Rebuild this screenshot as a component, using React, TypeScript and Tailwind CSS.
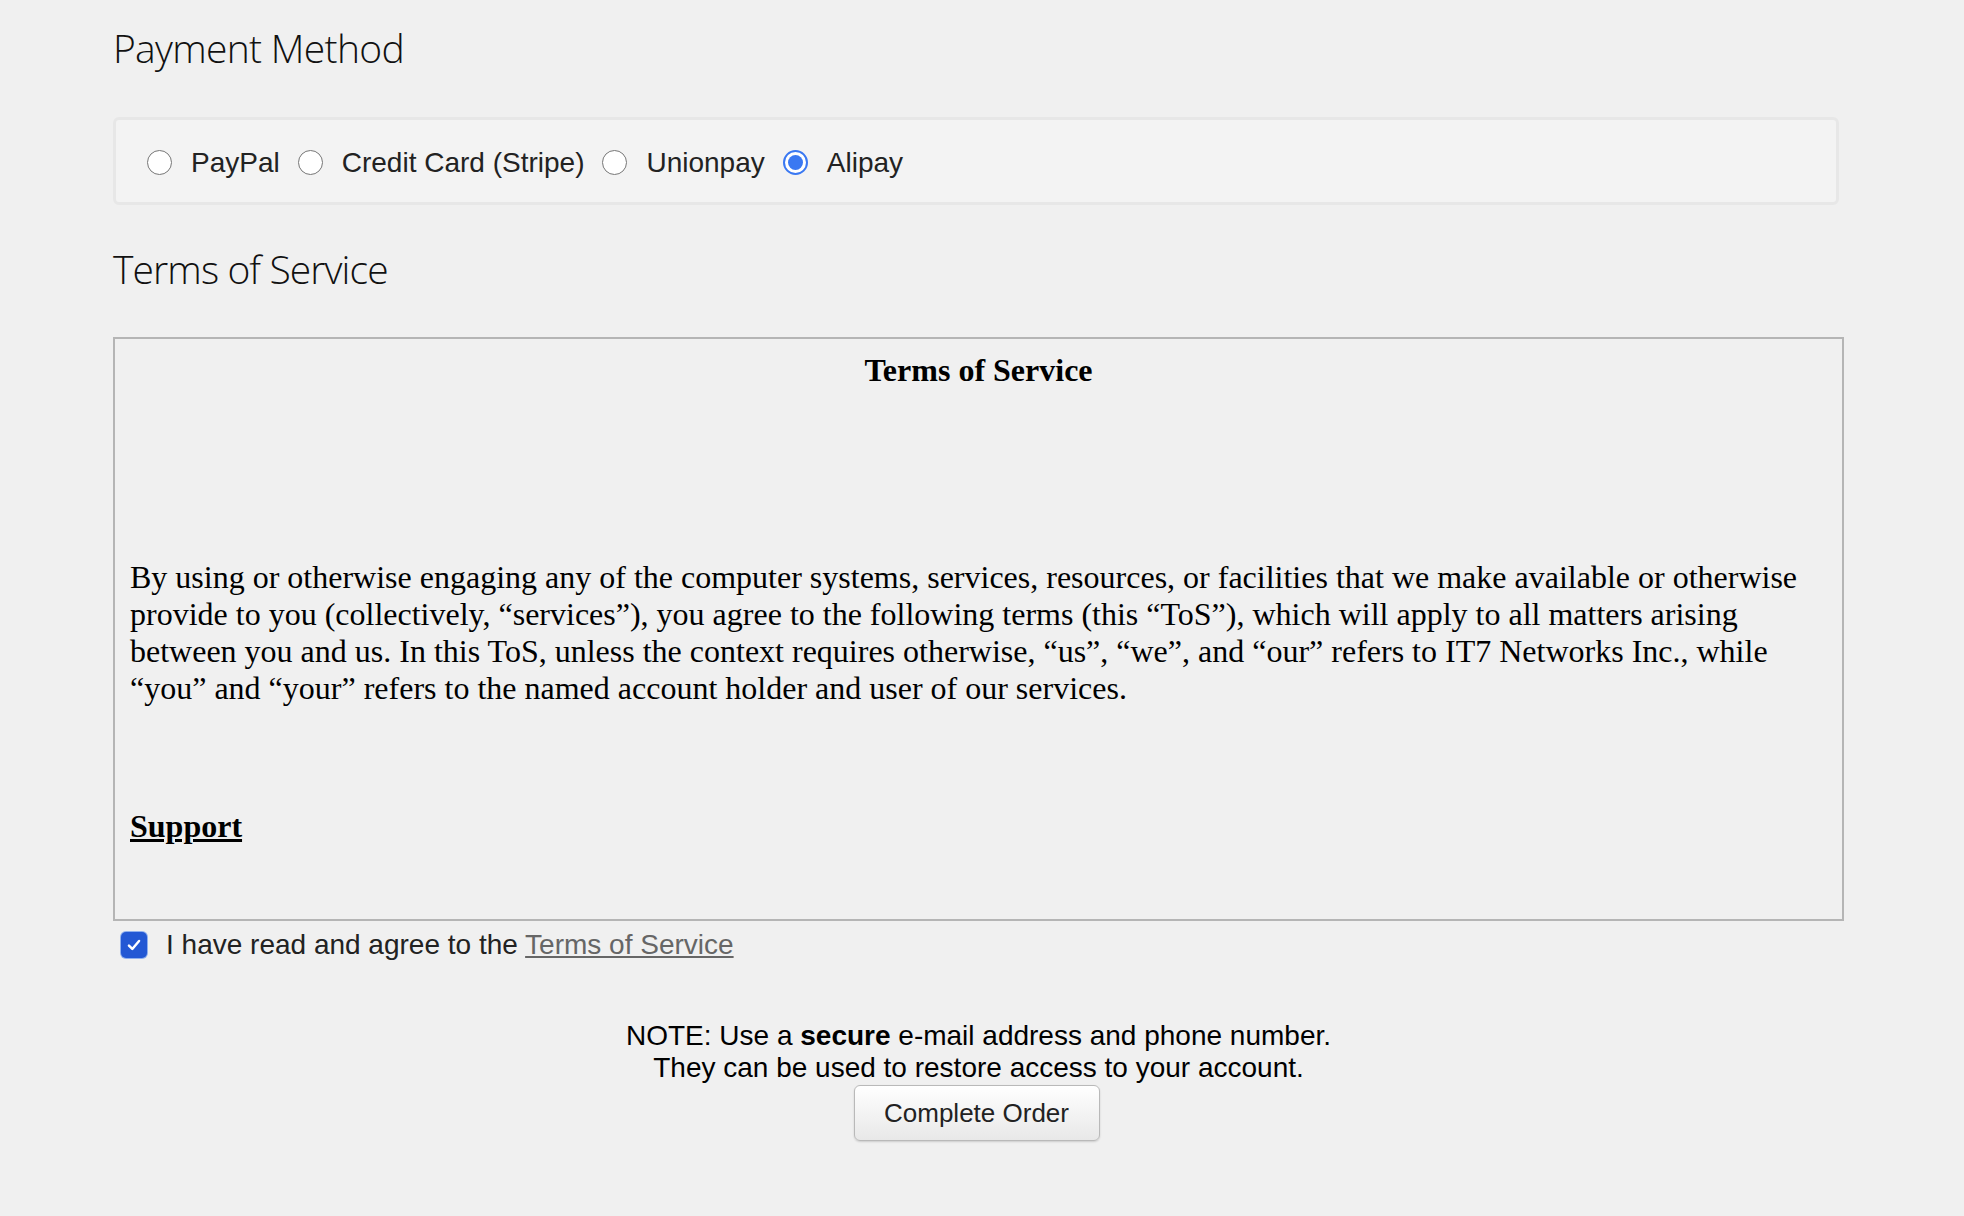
import React from "react";

const sans = { fontFamily: '"Liberation Sans", Arial, sans-serif' };
const heading = { fontFamily: '"Open Sans", sans-serif' };

function Radio({ label, checked }: { label: string; checked?: boolean }) {
  return (
    <label className="flex items-center">
      {checked ? (
        <span className="w-[25px] h-[25px] rounded-full border-2 border-[#3a78f2] bg-white flex items-center justify-center">
          <span className="w-[15px] h-[15px] rounded-full bg-[#3a78f2]" />
        </span>
      ) : (
        <span className="w-[25px] h-[25px] rounded-full border-[1.5px] border-[#767676] bg-white" />
      )}
      <span className="ml-[19px] mr-[18px] text-[28px] leading-[32px] text-[#222]">
        {label}
      </span>
    </label>
  );
}

export default function App() {
  return (
    <div className="min-h-screen w-full bg-[#f0f0f0] text-black" style={sans}>
      <div className="ml-[113px] w-[1731px] pt-[20px]">
        {/* Payment method */}
        <h2
          className="text-[39px] leading-[56px] font-light text-[#111] tracking-[-0.7px]"
          style={heading}
        >
          Payment Method
        </h2>
        <div className="mt-[41px] w-[1726px] h-[88px] rounded-[6px] border-[3px] border-[#e7e7e7] bg-[#f3f3f3] flex items-center pl-[31px] pt-[3px]">
          <Radio label="PayPal" />
          <Radio label="Credit Card (Stripe)" />
          <Radio label="Unionpay" />
          <Radio label="Alipay" checked />
        </div>

        {/* Terms of service */}
        <h2
          className="mt-[36px] text-[39px] leading-[56px] font-light text-[#111] tracking-[-0.9px]"
          style={heading}
        >
          Terms of Service
        </h2>
        <div
          className="mt-[40px] h-[584px] border-2 border-[#b5b5b5] overflow-hidden px-[15px] pt-[13px] text-[32px] leading-[37px]"
          style={{ fontFamily: '"Liberation Serif", "Times New Roman", serif' }}
        >
          <p className="text-center font-bold">Terms of Service</p>
          <p className="mt-[170px]">
            By using or otherwise engaging any of the computer systems, services, resources, or facilities that we make available or otherwise provide to you (collectively, “services”), you agree to the following terms (this “ToS”), which will apply to all matters arising between you and us. In this ToS, unless the context requires otherwise, “us”, “we”, and “our” refers to IT7 Networks Inc., while “you” and “your” refers to the named account holder and user of our services.
          </p>
          <p className="mt-[101px] font-bold underline">Support</p>
        </div>

        <label className="mt-[8px] flex items-center text-[28px] leading-[32px] text-[#222]">
          <span className="ml-[8px] w-[26px] h-[26px] rounded-[5px] bg-[#2358d4] flex items-center justify-center ring-1 ring-[#8fb0ee]">
            <svg viewBox="0 0 16 16" className="w-[18px] h-[18px]">
              <path d="M3.5 8.5 L6.5 11.5 L12.5 4.5" fill="none" stroke="white" strokeWidth="2.2" strokeLinecap="round" strokeLinejoin="round" />
            </svg>
          </span>
          <span className="ml-[19px]">
            I have read and agree to the{" "}
            <a className="text-[#666] underline">Terms of Service</a>
          </span>
        </label>

        <div className="mt-[59px] text-center text-[28px] leading-[32px] text-black">
          <p>
            NOTE: Use a <b>secure</b> e-mail address and phone number.
          </p>
          <p>They can be used to restore access to your account.</p>
          <button className="mt-[1px] -ml-[4px] w-[246px] h-[56px] rounded-[6px] border border-[#b9b9b9] bg-gradient-to-b from-white to-[#e8e8e8] shadow-[0_1px_2px_rgba(0,0,0,0.15)] text-[26px] text-[#222]">
            Complete Order
          </button>
        </div>
      </div>
    </div>
  );
}
